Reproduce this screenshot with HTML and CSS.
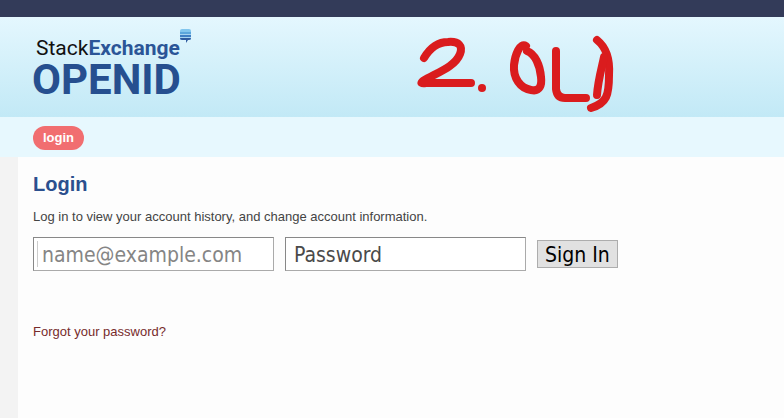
FILE: index.html
```html
<!DOCTYPE html>
<html lang="en">
<head>
    <meta charset="UTF-8">
    <meta name="viewport" content="width=device-width, initial-scale=1.0">
    <title>Login - Stack Exchange OpenID</title>
    <link rel="stylesheet" href="styles.css">
</head>
<body>

<div class="topbar"></div>

<header class="header">
    <a class="logo" href="#">
        <span class="logo-top">Stack<b>Exchange</b></span>
        <span class="logo-bottom">OPENID</span>
        <svg class="logo-icon" width="11" height="14" viewBox="0 0 11 14">
            <path d="M0 3V2a2 2 0 0 1 2-2h7a2 2 0 0 1 2 2v1z" fill="#82c6ee"/>
            <path d="M0 3h11v8H0z" fill="#a5d3f0"/>
            <path d="M0 3h11v2H0z" fill="#5ba6dc"/>
            <path d="M0 6h11v2H0z" fill="#3f7fc4"/>
            <path d="M0 9h11a2 2 0 0 1-2 2H8l-2 3v-3H2a2 2 0 0 1-2-2z" fill="#2f5b9f"/>
        </svg>
    </a>
    <!-- Hand-drawn note -->
    <svg class="note" width="204" height="82" viewBox="415 34 204 82">
        <path d="M424 58C430 48 438 42 448 42C459 41 463 46 460 54C455 67 436 73 423 81Q419 84 426 83L471 83"/>
        <path d="M482 88v.1"/>
        <path d="M526 46C520 42 515 55 514 65C513 78 520 88 531 90C540 92 542 85 541 77C540 65 535 54 527 51"/>
        <path d="M556 51V89Q557 98 565 98L586 98"/>
        <path d="M597 40C607 48 610 60 609 75C609 95 607 103 591 108"/>
        <path d="M604 57C602 67 598 80 597 95"/>
    </svg>
</header>

<nav class="nav">
    <a class="tab" href="#">login</a>
</nav>

<main class="content">
    <h1>Login</h1>
    <p>Log in to view your account history, and change account information.</p>

    <form class="login-form">
        <input type="email" class="email" placeholder="name@example.com" aria-label="Email">
        <input type="password" class="password" placeholder="Password" aria-label="Password">
        <button type="submit">Sign In</button>
    </form>

    <a class="forgot" href="#">Forgot your password?</a>
</main>

</body>
</html>
```
FILE: styles.css
```css
* {
    box-sizing: border-box;
}
body {
    display: flex;
    flex-direction: column;
    min-height: 100vh;
    margin: 0;
    background-color: #f3f3f3;
    color: #444;
    font-family: "Liberation Sans", Arial, sans-serif;
    font-size: 13px;
    line-height: 16px;
}
.topbar {
    height: 17px;
    background-color: #333b59;
}

/* Header */
.header {
    position: relative;
    height: 100px;
    padding: 20px 32px;
    background: linear-gradient(#e4f7fe, #c2e9f6);
}
.logo {
    position: relative;
    display: inline-flex;
    flex-direction: column;
    color: #264f8f;
    font-family: Roboto, sans-serif;
    text-decoration: none;
}
.logo-top {
    padding-left: 4px;
    font-size: 21px;
    line-height: 22px;
    color: #111;
}
.logo-top b {
    color: #2b5597;
}
.logo-bottom {
    font-size: 42px;
    font-weight: bold;
    line-height: 42px;
}
.logo-icon {
    position: absolute;
    top: -8px;
    right: -10px;
}
.note {
    position: absolute;
    top: 17px;
    left: 415px;
    fill: none;
    stroke: #da1c1e;
    stroke-width: 8px;
    stroke-linecap: round;
    stroke-linejoin: round;
}

/* Navigation */
.nav {
    display: flex;
    align-items: center;
    height: 40px;
    padding: 2px 33px 0;
    background-color: #e7f8fe;
}
.tab {
    padding: 4px 10px;
    border-radius: 12px;
    background-color: #f16e70;
    color: #fff;
    font-weight: bold;
    text-decoration: none;
}

/* Login page */
.content {
    flex: 1;
    margin-left: 18px;
    padding: 15px;
    background-color: #fdfdfd;
}
h1 {
    margin: 0;
    color: #2b4f8e;
    font-size: 20px;
    line-height: 24px;
}
p {
    margin: 13px 0 12px;
}
.login-form {
    display: flex;
    align-items: center;
    gap: 11px;
    margin-bottom: 53px;
}
.login-form input,
.login-form button {
    font-family: "DejaVu Sans Condensed", Tahoma, sans-serif;
    font-size: 21px;
}
.login-form input {
    width: 241px;
    height: 34px;
    padding: 4px 8px 2px;
    border: 1px solid #aaa;
    border-top-color: #888;
    border-left-color: #888;
    background-color: #fff;
}
.email {
    background-image: linear-gradient(#ccc, #ccc);
    background-repeat: no-repeat;
    background-position: 3px center;
    background-size: 1px 26px;
}
.email::placeholder {
    color: #858585;
}
.password::placeholder {
    color: #4a4a4a;
}
.login-form button {
    height: 28px;
    padding: 2px 7px 0;
    border: 1px solid #adadad;
    background-color: #e1e1e1;
    color: #000;
    line-height: 24px;
}
.forgot {
    color: #772b2b;
    text-decoration: none;
}
```
